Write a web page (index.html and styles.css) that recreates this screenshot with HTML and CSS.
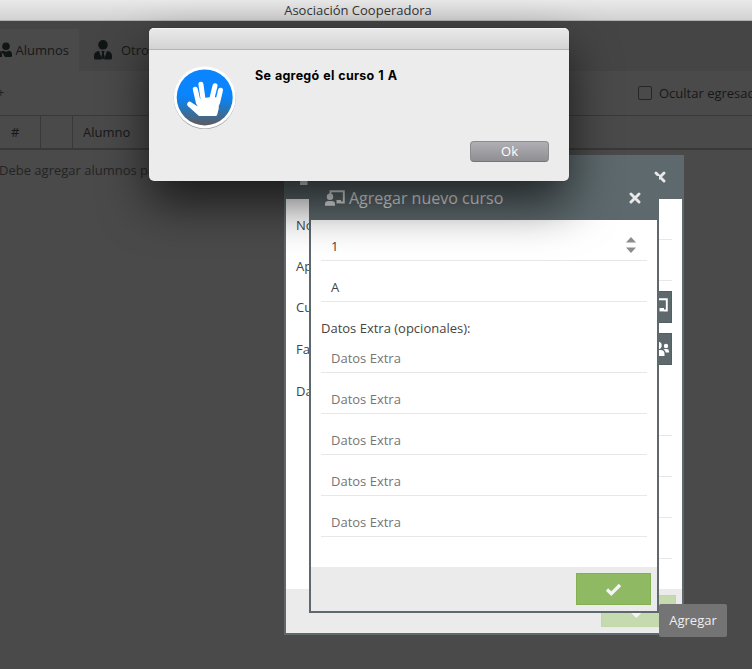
FILE: index.html
```
<!DOCTYPE html>
<html lang="es">
<head>
<meta charset="utf-8">
<title>Asociación Cooperadora</title>
<link rel="stylesheet" href="styles.css">
</head>
<body>
<svg width="0" height="0" class="defs">
  <symbol id="chalk" viewBox="0 0 20 16"><path d="M5.500 4V1.200h13.300v11.300H16" fill="none" stroke="currentColor" stroke-width="1.900"/><path d="M11.500 10h4.500v3.400h-4.500z" fill="currentColor"/><circle cx="5" cy="6.700" r="3.200" fill="currentColor"/><path d="M0 15.700v-1.500q0-3.200 3.200-3.200h3.600q3.200 0 3.200 3.200v1.500z" fill="currentColor"/></symbol>
  <symbol id="close" viewBox="0 0 12 12"><path d="M2 2l8 8M10 2l-8 8" fill="none" stroke="currentColor" stroke-width="2.900" stroke-linecap="round"/></symbol>
  <symbol id="check" viewBox="0 0 17 13"><path d="M2 6.500l4.300 4.200L15 2" fill="none" stroke="currentColor" stroke-width="3.200"/></symbol>
  <symbol id="users" viewBox="0 0 22 16"><circle cx="11" cy="4.500" r="3.700"/><circle cx="3" cy="5" r="2.200"/><circle cx="19" cy="5" r="2.200"/><path d="M4.500 15v-2q0-4 4-4h5q4 0 4 4v2zM0 11.500v-1.200q0-2.300 2.300-2.300h1.500q1 0 1.700.5Q3.500 9.500 3.300 11.500zM22 11.500v-1.200q0-2.300-2.300-2.300h-1.500q-1 0-1.700.5 2 1 2.200 3z"/></symbol>
</svg>

<div class="app">
  <header class="titlebar">Asociación Cooperadora</header>
  <nav class="tabs">
    <div class="tab active">
      <svg class="friends" viewBox="0 0 24 16"><circle cx="8" cy="4" r="4"/><path d="M0 15v-2q0-4 4-4h7q3 0 3 3v3z"/><circle cx="18" cy="4.200" r="3.800"/><path d="M13 9.500q1-.8 2.500-.8l2.500 1 2.500-1q3.500 0 3.500 4v1.200q0 1-1 1h-6q-1-3-4-5z"/></svg>
      <span>Alumnos</span>
    </div>
    <div class="tab">
      <svg class="tie" viewBox="0 0 18 20"><circle cx="9" cy="4.800" r="4.800"/><path d="M5 11l3 8.500H1.500Q0 19.500 0 18v-2q0-4.700 5-5zM13 11l-3 8.500h6.500q1.500 0 1.500-1.500v-2q0-4.700-5-5zM7.300 11h3.400l-.9 2 .9 4.500-1.700 2-1.700-2 .9-4.500z"/></svg>
      <span>Otros</span>
    </div>
  </nav>
  <div class="toolbar">
    <span class="plus">+</span>
    <label class="hide"><span class="box"></span>Ocultar egresados</label>
  </div>
  <div class="thead"><span class="c-num">#</span><span class="c-blank"></span><span class="c-name">Alumno</span></div>
  <p class="empty">Debe agregar alumnos para</p>
</div>

<section class="modal back">
  <header class="modal-head"><svg class="head-user" viewBox="0 0 16 16"><circle cx="8" cy="4" r="4"/><path d="M0 16v-2q0-4 4-4h3.500v6z"/></svg><svg class="x"><use href="#close"/></svg></header>
  <div class="modal-body">
    <div class="row"><span>Nombre</span><i></i></div>
    <div class="row"><span>Apellido</span><i></i></div>
    <div class="row tall"><span>Curso</span><b class="side"><svg class="chalk"><use href="#chalk"/></svg></b></div>
    <div class="row tall"><span>Familia</span><b class="side"><svg class="users"><use href="#users"/></svg></b></div>
    <div class="row caption"><span>Datos</span></div>
    <div class="row line"><i></i></div>
    <div class="row line"><i></i></div>
    <div class="row line"><i></i></div>
    <div class="row line"><i></i></div>
  </div>
  <footer class="modal-foot"><button class="ok faded"><svg class="check"><use href="#check"/></svg></button></footer>
</section>

<section class="modal front">
  <header class="modal-head"><svg class="chalk"><use href="#chalk"/></svg><h2>Agregar nuevo curso</h2><svg class="x"><use href="#close"/></svg></header>
  <div class="modal-body">
    <div class="field"><span>1</span><svg class="spin" viewBox="0 0 10 16"><path d="M0 5.500L5 0l5 5.500zM0 10.500L5 16l5-5.500z"/></svg></div>
    <div class="field">A</div>
    <p class="extra">Datos Extra (opcionales):</p>
    <div class="field hint">Datos Extra</div>
    <div class="field hint">Datos Extra</div>
    <div class="field hint">Datos Extra</div>
    <div class="field hint">Datos Extra</div>
    <div class="field hint">Datos Extra</div>
  </div>
  <footer class="modal-foot"><button class="ok"><svg class="check"><use href="#check"/></svg></button></footer>
</section>

<div class="tip">Agregar</div>

<section class="alert">
  <div class="alert-bar"></div>
  <div class="alert-main">
    <svg class="hand" viewBox="0 0 64 64">
      <defs><linearGradient id="sky" x2="0" y2="1"><stop offset="0" stop-color="#0a84ff"/><stop offset=".45" stop-color="#0a84ff"/><stop offset=".6" stop-color="#147edb"/><stop offset="1" stop-color="#5f5a5c"/></linearGradient></defs>
      <circle cx="31.700" cy="33" r="31" fill="#999"/>
      <circle cx="31.700" cy="32.400" r="31" fill="#fff"/>
      <circle cx="31.700" cy="32.400" r="28" fill="url(#sky)"/>
      <g fill="none" stroke="#fff" stroke-width="5" stroke-linecap="round" stroke-linejoin="round"><path d="M22.300 24.200L25.500 38M27.900 19.200L30.300 36M42 20.800L37.800 38M47.500 25.300L44.500 38"/><path d="M16.700 39.200L26 46"/></g>
      <path d="M23.500 34.500l8-1.500 2.600-.500 3-.300h9.200l-.6 11.500-1.500 6-1 1.200H26L15.200 41.200l3-3.500 6.200 3.500z" fill="#fff"/>
    </svg>
    <strong>Se agregó el curso 1 A</strong>
    <button class="alert-ok">Ok</button>
  </div>
</section>
</body>
</html>
```
FILE: styles.css
```
* { box-sizing: border-box; }
body { margin: 0; width: 752px; height: 669px; overflow: hidden; position: relative; background: #4a4a4a; color: #444; font: 13px/18px "Open Sans", "Noto Sans", sans-serif; }
.defs { position: absolute; }
svg { display: block; flex: none; }
h2, p { margin: 0; font-weight: 400; }
button { border: 0; padding: 0; font: inherit; }

.app { color: #171717; }
.titlebar { height: 21px; padding-right: 36px; text-align: center; line-height: 21px; color: #333; background: linear-gradient(#e9e9e9, #d2d2d2); border-bottom: 1px solid #b0b0b0; }
.tabs { display: flex; align-items: flex-end; height: 50px; background: #454545; }
.tab { display: flex; align-items: center; height: 42px; padding-left: 15px; }
.tab.active { width: 79px; padding-left: 0; background: #4a4a4a; }
.friends { width: 24px; height: 16px; margin: 0 3.500px 0 -12px; fill: #101516; }
.tie { width: 18px; height: 20px; margin-right: 9px; fill: #101516; }
.toolbar { display: flex; justify-content: space-between; align-items: center; height: 44px; white-space: nowrap; }
.plus { margin-left: -3px; padding-bottom: 2px; color: #222; }
.hide { display: flex; align-items: center; gap: 7px; width: 114px; }
.box { flex: none; width: 14px; height: 14px; border: 1px solid #262626; border-radius: 2px; }
.thead { display: flex; height: 35px; line-height: 33px; border-top: 1px solid #393939; border-bottom: 2px solid #393939; }
.c-num { width: 41px; padding-left: 11px; border-right: 1px solid #393939; }
.c-blank { width: 32px; border-right: 1px solid #393939; }
.c-name { padding-left: 10px; }
.empty { margin-top: 11px; margin-left: -1px; color: #242424; white-space: nowrap; }

.modal { position: absolute; display: flex; flex-direction: column; border: 2px solid #5d696d; background: #fff; }
.back { left: 284px; top: 155px; width: 400px; height: 480px; }
.front { left: 309px; top: 176px; width: 350px; height: 437px; }
.modal-head { display: flex; align-items: center; height: 42px; padding: 0 16px 2px 14px; background: #5d696d; color: #e8e8e8; }
.modal-head h2 { margin-left: 4px; font-size: 16px; line-height: 22px; color: #e4e4e4; }
.x { width: 12px; height: 12px; margin-left: auto; }
.head-user { width: 16px; height: 16px; fill: #e8e8e8; }
.chalk { width: 20px; height: 16px; }
.modal-body { flex: 1; padding: 0 10px; }
.modal-foot { display: flex; justify-content: flex-end; align-items: center; height: 44px; padding-right: 6px; background: #ebebeb; }
.ok { display: grid; place-items: center; width: 75px; height: 32px; background: #90b963; border: 1px solid #84b04f; color: #f5f5f5; }
.ok.faded { background: #c5daae; border-color: #c0d8a6; }
.check { width: 17px; height: 13px; }

.row { display: flex; height: 30px; margin-top: 11px; line-height: 30px; }
.row span { width: 110px; }
.row i { flex: 1; border-bottom: 1px solid #e7e7e7; }
.row.tall { height: 32px; margin-top: 10px; line-height: 32px; }
.row.line { padding-left: 110px; }
.side { display: grid; place-items: center; width: 28px; margin-left: auto; background: #5d696d; border: 1px solid #526064; border-left: 0; color: #fff; }
.side .chalk { margin-bottom: 2px; }
.users { width: 22px; height: 16px; fill: #fff; }
.row.caption { height: 20px; margin-top: 10px; line-height: 32px; }

.field { display: flex; align-items: center; justify-content: space-between; height: 30px; margin-top: 11px; padding: 1px 11px 0 10px; border-bottom: 1px solid #e7e7e7; }
.field.hint { color: #757575; }
.spin { width: 10px; height: 16px; margin-bottom: 2px; fill: #8c8c8c; }
.extra { margin: 17px 0 -5px; }

.tip { position: absolute; left: 659px; top: 604px; width: 68px; height: 33px; border-radius: 2px; background: #747474; color: #eee; line-height: 33px; text-align: center; }

.alert { position: absolute; left: 149px; top: 28px; width: 420px; height: 153px; border-radius: 5px; overflow: hidden; background: #ececec; box-shadow: 0 0 1px rgba(0,0,0,.5), 0 22px 48px rgba(0,0,0,.65); }
.alert-bar { height: 22px; background: linear-gradient(#e9e9e9, #d3d3d3); border-bottom: 1px solid #b4b4b4; border-top: 1px solid #f4f4f4; }
.alert-main { display: grid; grid-template-columns: 64px 1fr; grid-template-rows: 74px 21px; column-gap: 18px; padding: 17px 20px 0 24px; }
.hand { width: 64px; height: 64px; margin-top: -2px; }
.alert-main strong { font: 700 12.5px/18px Inter, sans-serif; letter-spacing: .25px; word-spacing: .6px; color: #000; }
.alert-ok { grid-column: 2; justify-self: end; width: 79px; height: 21px; border-radius: 4px; background: linear-gradient(#b0afb4, #8f8e93); border: 1px solid #8b8a8f; border-bottom-color: #747378; color: #fff; line-height: 19px; }
```
